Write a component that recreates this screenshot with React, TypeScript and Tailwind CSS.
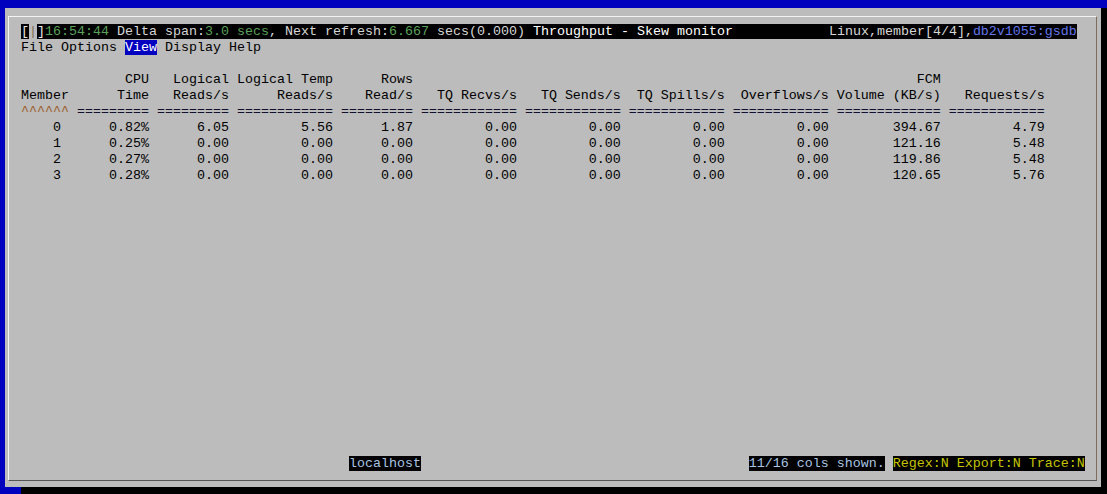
import React from "react";

const W = [6, 9, 9, 12, 9, 12, 12, 12, 12, 13, 12];

function fmt(cells: string[], leftFirst: boolean): string {
  return cells
    .map((c, i) => (i === 0 && leftFirst ? c.padEnd(W[i]) : c.padStart(W[i])))
    .join(" ");
}

const H1 = ["", "CPU", "Logical", "Logical Temp", "Rows", "", "", "", "", "FCM", ""];
const H2 = [
  "Member",
  "Time",
  "Reads/s",
  "Reads/s",
  "Read/s",
  "TQ Recvs/s",
  "TQ Sends/s",
  "TQ Spills/s",
  "Overflows/s",
  "Volume (KB/s)",
  "Requests/s",
];

const DATA: string[][] = [
  ["0", "0.82%", "6.05", "5.56", "1.87", "0.00", "0.00", "0.00", "0.00", "394.67", "4.79"],
  ["1", "0.25%", "0.00", "0.00", "0.00", "0.00", "0.00", "0.00", "0.00", "121.16", "5.48"],
  ["2", "0.27%", "0.00", "0.00", "0.00", "0.00", "0.00", "0.00", "0.00", "119.86", "5.48"],
  ["3", "0.28%", "0.00", "0.00", "0.00", "0.00", "0.00", "0.00", "0.00", "120.65", "5.76"],
];

function dataLine(r: string[]): string {
  const first = r[0].padStart(5).padEnd(6);
  return [first, ...r.slice(1).map((c, i) => c.padStart(W[i + 1]))].join(" ");
}

const sepRest = W.slice(1)
  .map((w) => "=".repeat(w))
  .join(" ");

export default function App() {
  return (
    <div className="w-[1107px] h-[494px] bg-[#0000bf] flex flex-col pt-[8px] overflow-hidden font-['Liberation_Mono','Courier_New',monospace] text-[13.333px] leading-[16px]">
      <div className="flex h-[479px]">
        <div className="w-[5px]" />
        <div className="w-[1096px] bg-[#bcbcbc] pt-[8px] pl-[3px] pr-[4px] pb-[6px] flex">
          <div className="flex-1 border-t border-l border-t-[#f4f4f4] border-l-[#f4f4f4] border-r border-b border-r-[#7d6e5c] border-b-[#555555] pl-[12px] pt-[7px] pb-[8px] flex flex-col whitespace-pre text-black">
            <div className="h-[16px]">
              <span className="bg-black text-[#e8e8e8]">[</span>
              <span className="text-[#7e6e50]">|</span>
              <span className="bg-black text-[#e8e8e8]">]</span>
              <span className="bg-black text-[#5aa05a]">16:54:44</span>
              <span className="bg-black text-[#d6d6d6]"> Delta span:</span>
              <span className="bg-black text-[#5aa05a]">3.0 secs</span>
              <span className="bg-black text-[#d6d6d6]">, Next refresh:</span>
              <span className="bg-black text-[#5aa05a]">6.667</span>
              <span className="bg-black text-[#d6d6d6]"> secs(0.000) </span>
              <span className="bg-black text-white">Throughput - Skew monitor</span>
              <span className="bg-black text-[#d6d6d6]">{"            "}Linux,member[4/4],</span>
              <span className="bg-black text-[#6076ec]">db2v1055:gsdb</span>
            </div>
            <div className="h-[16px]">
              <span>File Options </span>
              <span className="bg-[#0000c0] text-white">View</span>
              <span> Display Help</span>
            </div>
            <div className="h-[16px]" />
            <div className="h-[16px]">{fmt(H1, true)}</div>
            <div className="h-[16px]">{fmt(H2, true)}</div>
            <div className="h-[16px]">
              <span className="text-[#9a5a1e]">^^^^^^</span>
              <span className="text-[#101030]">{" " + sepRest}</span>
            </div>
            {DATA.map((r) => (
              <div key={r[0]} className="h-[16px]">
                {dataLine(r)}
              </div>
            ))}
            <div className="h-[16px] mt-auto">
              <span>{" ".repeat(41)}</span>
              <span className="bg-black text-[#a8c4e0]">localhost</span>
              <span>{" ".repeat(41)}</span>
              <span className="bg-black text-[#a8c4e0]">11/16 cols shown.</span>
              <span> </span>
              <span className="bg-black text-[#c4c400]">Regex:N Export:N Trace:N</span>
            </div>
          </div>
        </div>
        <div className="flex-1 bg-black" />
      </div>
      <div className="flex flex-1">
        <div className="w-[21px]" />
        <div className="flex-1 bg-black" />
      </div>
    </div>
  );
}
